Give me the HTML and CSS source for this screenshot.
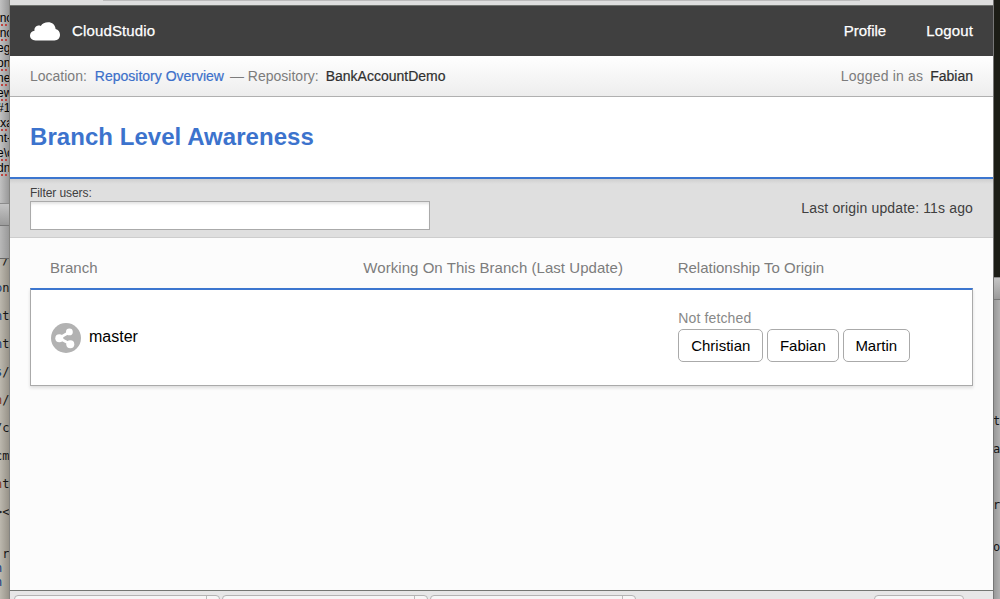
FILE: index.html
```html
<!DOCTYPE html>
<html lang="en">
<head>
<meta charset="utf-8">
<title>CloudStudio</title>
<link rel="stylesheet" href="styles.css">
</head>
<body>
<div class="desktop">
  <aside class="left-edge">
    <div class="notes"><p>inc</p><p>inc</p><p class="ok">eg</p><p>ont</p><p>ne</p><p>ew</p><p class="ok">#1a</p><p>txa</p><p class="ok">nt-</p><p>e\c</p><p>dn</p></div>
    <div class="toolbar-end"></div>
    <div class="gap-end"></div>
    <pre class="code"><b>.</b>/

<b>o</b>n

<b>n</b>t

<b>n</b>t

<b>s</b>/

<i>n</i>/

/c

cm

<i>n</i>t

&gt;&lt;


 r
<b>n</b>
<b>n</b></pre>
  </aside>
  <main class="window">
    <div class="chrome-top"><span></span></div>
    <header class="topbar">
      <svg class="cloud" width="30" height="19" viewBox="0 0 30 19"><path fill="#fff" d="M5.500 18.500C2.200 18.500 0 16.400 0 13.600 0 10.900 2 9.200 4.500 8.700 4 5.200 7.400 2.600 10.800 4 12.200 1.600 14.800.3 18 .3c4.300 0 7.200 2.700 7.600 6.800 2.700.6 4.400 2.900 4.400 5.700 0 3.400-2.200 5.700-5.600 5.700z"/></svg>
      <span class="brand">CloudStudio</span>
      <nav><a class="profile">Profile</a><a>Logout</a></nav>
    </header>
    <div class="crumbs">
      <span>Location:</span><a class="link">Repository Overview</a><span class="repo">— Repository:</span><strong>BankAccountDemo</strong>
      <span class="login">Logged in as</span><strong>Fabian</strong>
    </div>
    <div class="title"><h1>Branch Level Awareness</h1></div>
    <div class="filter">
      <label>Filter users:<input type="text"></label>
      <span class="updated">Last origin update: 11s ago</span>
    </div>
    <section class="content">
      <div class="row head"><span>Branch</span><span class="working">Working On This Branch (Last Update)</span><span>Relationship To Origin</span></div>
      <div class="row branch">
        <div class="name">
          <svg width="30" height="30" viewBox="0 0 30 30"><circle cx="15" cy="15" r="15" fill="#b2b2b2"/><path d="M18.500 9 8.200 15.100 19.300 21" fill="none" stroke="#fff" stroke-width="2.700"/><g fill="#fff"><circle cx="18.400" cy="8.900" r="3.400"/><circle cx="8.300" cy="15.200" r="4"/><circle cx="19.300" cy="21.200" r="4"/></g></svg>
          <span>master</span>
        </div>
        <div></div>
        <div class="relation"><div class="state">Not fetched</div><div class="users"><span>Christian</span><span>Fabian</span><span>Martin</span></div></div>
      </div>
    </section>
    <footer class="chrome-bottom"><i></i><i></i><i></i><i class="last"></i></footer>
  </main>
  <aside class="right-edge">
    <div class="dark"></div><div class="toolbar-end"></div>
    <pre class="code">t

a



r


o</pre>
  </aside>
</div>
</body>
</html>
```
FILE: styles.css
```css
* { box-sizing: border-box; }
body { margin: 0; font-family: "Liberation Sans", Arial, sans-serif; overflow: hidden; }
p, h1, pre { margin: 0; }
.desktop { display: flex; width: 1000px; height: 599px; overflow: hidden; }

/* slivers of the windows behind */
.left-edge { width: 10px; overflow: hidden; border-right: 1px solid #858582; background: linear-gradient(90deg, #bcb8ae, #989389); }
.notes { height: 203px; padding-top: 11px; font-size: 12px; line-height: 15px; background: linear-gradient(90deg, #c1c1c1, #999); }
.notes p { height: 15px; margin-left: -3px; white-space: nowrap; text-decoration: underline dotted #bd4440 2px; text-underline-offset: 2px; }
.notes .ok { text-decoration: none; }
.toolbar-end { height: 23px; border-top: 1px solid #8b8b8b; border-bottom: 1px solid #777; background: linear-gradient(#c4c4c4, #9b9b9b); }
.gap-end { height: 33px; border-bottom: 1px solid #666; background: linear-gradient(90deg, #b8b8b8, #999); }
.code { font: 12px/14px "DejaVu Sans Mono", monospace; color: #151515; }
.left-edge .code { margin: -6px 0 0 -5px; clip-path: inset(6px 0 0 0); }
.code b, .code i { font-weight: 400; font-style: normal; color: #123a80; }
.code i { color: #843415; }
.right-edge { width: 7px; overflow: hidden; background: linear-gradient(90deg, #999, #b1b1b1); border-left: 1px solid #777; }
.dark { height: 277px; margin-left: -1px; background: #1c1d16; }
.right-edge .code { padding-top: 114px; margin-left: -1px; }

/* application window */
.window { width: 983px; display: flex; flex-direction: column; background: #fcfcfc; }
.chrome-top { height: 6px; background: #dedede; border-bottom: 1px solid #70736f; padding-left: 93px; }
.chrome-top span { display: block; width: 757px; height: 1px; background: #bbb; }
.topbar { height: 50px; background: #404040; color: #fff; display: flex; align-items: center; padding: 0 20px; font-size: 15px; -webkit-text-stroke: .25px #fff; }
.cloud { margin-right: 12px; }
.brand, .topbar nav { margin-top: -2px; }
.brand { letter-spacing: .14px; }
.topbar nav { margin-left: auto; display: flex; gap: 40px; }
.topbar nav a { letter-spacing: .15px; }
.topbar nav .profile { letter-spacing: 0; }
.crumbs { height: 41px; border-bottom: 1px solid #b0b0b0; background: linear-gradient(#fff, #ededed); padding: 0 20px; display: flex; align-items: center; font-size: 14px; color: #7c7c7c; white-space: nowrap; }
.link { color: #3c70ca; margin: 0 6px 0 8px; -webkit-text-stroke: .2px #3c70ca; }
.crumbs strong { font-weight: 400; color: #303030; margin-left: 7px; -webkit-text-stroke: .2px #303030; }
.login { margin-left: auto; letter-spacing: .18px; }
.title { height: 82px; background: #fff; border-bottom: 2px solid #3c76cf; padding: 26px 20px 0; }
h1 { font-size: 24px; line-height: 28px; letter-spacing: .05px; color: #3c73cd; }
.filter { height: 59px; background: linear-gradient(#cfcfcf, #dfdfdf 5px); border-bottom: 1px solid #cdcdcd; padding: 6px 20px 0; display: flex; justify-content: space-between; color: #404040; }
.filter label { font-size: 12px; line-height: 16px; letter-spacing: -.08px; }
.filter input { display: block; width: 400px; height: 29px; border: 1px solid #aaa; background: #fff; box-shadow: inset 0 3px 3px -1px #e4e4e4; outline: 0; }
.updated { font-size: 14px; line-height: 16px; padding-top: 15px; letter-spacing: .14px; }
.content { flex: 1; padding: 0 20px; }
.row { display: grid; grid-template-columns: repeat(3, 1fr); }
.row > * { padding-left: 20px; }
.head { height: 50px; line-height: 60px; font-size: 15px; color: #7d7d7d; white-space: nowrap; }
.head > :not(:first-child) { padding-left: 19px; }
.working { letter-spacing: .05px; }
.branch { height: 98px; background: #fff; border: 1px solid #aaa; border-top: 2px solid #3c76cf; box-shadow: 0 2px 3px #ddd; }
.name { display: flex; align-items: center; gap: 8px; font-size: 16px; color: #000; }
.name svg { margin-top: 1px; }
.name span { margin-top: -2px; }
.relation { padding-top: 20px; }
.state { font-size: 14px; line-height: 16px; color: #888; letter-spacing: .13px; }
.users { display: flex; gap: 4px; margin-top: 3px; }
.users span { height: 33px; line-height: 31px; padding: 0 11.8px; border: 1px solid #aaa; border-radius: 5px; font-size: 15px; color: #000; }
.chrome-bottom { height: 9px; border-top: 1px solid #747773; background: #e7e7e7; display: flex; padding: 4px 29px 0 4px; gap: 2px; }
.chrome-bottom i { width: 206px; height: 12px; background: linear-gradient(90deg, transparent 191px, #bbb 191px 192px, transparent 192px), #f6f6f6; border: 1px solid #b4b4b4; border-radius: 4px 4px 0 0; }
.chrome-bottom .last { width: 90px; margin-left: auto; background: #f6f6f6; }
```
